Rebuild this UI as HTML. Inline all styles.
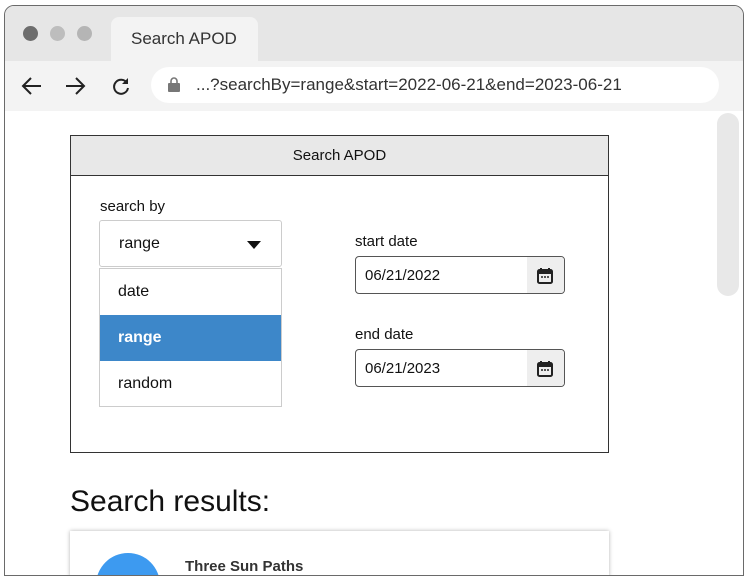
<!DOCTYPE html><html><head><style>
*{margin:0;padding:0;box-sizing:border-box}
body{width:750px;height:576px;background:#fff;position:relative;overflow:hidden;font-family:"Liberation Sans",Arial,sans-serif}
.win{position:absolute;left:4px;top:5px;width:740px;height:571px;border:1.5px solid #6a6a6a;border-radius:10px 10px 0 0;overflow:hidden;background:#fff}
.top{position:absolute;left:0;top:0;width:100%;height:56px;background:#e6e6e6}
.dot{position:absolute;top:20px;width:15px;height:15px;border-radius:50%}
.tab{position:absolute;left:106px;top:11px;width:147px;height:46px;background:#f3f3f3;border-radius:8px 8px 0 0;font-size:17px;color:#333;padding:12px 0 0 20px}
.bar{position:absolute;left:0;top:55px;width:100%;height:50px;background:#f3f3f3}
.url{position:absolute;left:146px;top:6px;width:568px;height:36px;background:#fff;border-radius:18px;font-size:17px;color:#333;padding:8px 0 0 45px}
.a{position:absolute}
</style></head><body>
<div class="win">
<div class="top">
<div class="dot" style="left:18px;background:#6d6d6d"></div>
<div class="dot" style="left:45px;background:#bdbdbd"></div>
<div class="dot" style="left:72px;background:#b5b5b5"></div>
<div class="tab">Search APOD</div>
</div>
<div class="bar">
<svg class="a" style="left:16px;top:15px" width="22" height="20" viewBox="0 0 22 20"><path d="M20 10H3M10 2L2 10l8 8" stroke="#222" stroke-width="2" fill="none"/></svg>
<svg class="a" style="left:59px;top:15px" width="22" height="20" viewBox="0 0 22 20"><path d="M2 10h17M12 2l8 8-8 8" stroke="#222" stroke-width="2" fill="none"/></svg>
<svg class="a" style="left:106px;top:15px" width="20" height="20" viewBox="0 0 20 20"><path d="M16 7A7 7 0 1 0 17 12" stroke="#222" stroke-width="2" fill="none"/><path d="M17 2v6h-6z" fill="#222"/></svg>
<div class="url"><svg class="a" style="left:17px;top:10px" width="12" height="15" viewBox="0 0 12 15"><path d="M3 6V4a3 3 0 0 1 6 0v2" stroke="#777" stroke-width="1.6" fill="none"/><rect x="0" y="6" width="12" height="9" rx="1" fill="#777"/></svg>...?searchBy=range&amp;start=2022-06-21&amp;end=2023-06-21</div>
</div>
<div class="a" style="left:712px;top:107px;width:22px;height:183px;background:#e8e8e8;border-radius:11px"></div>

<div class="a" style="left:65px;top:129px;width:539px;height:318px;border:1.5px solid #333">
<div style="height:40px;background:#e8e8e8;border-bottom:1.5px solid #333;text-align:center;font-size:15px;color:#111;padding-top:11px">Search APOD</div>
</div>
<div class="a" style="left:95px;top:192px;font-size:15px;color:#111">search by</div>
<div class="a" style="left:94px;top:214px;width:183px;height:47px;border:1px solid #ccc;border-radius:3px;font-size:16px;color:#111;padding:14px 0 0 19px">range
<svg class="a" style="left:147px;top:20px" width="14" height="8"><path d="M0 0h14L7 8z" fill="#111"/></svg></div>
<div class="a" style="left:94px;top:262px;width:183px;height:139px;border:1px solid #ccc;font-size:16px;color:#111">
<div style="height:46px;padding:14px 0 0 18px">date</div>
<div style="height:46px;padding:14px 0 0 18px;background:#3d87c9;color:#fff;font-weight:bold">range</div>
<div style="height:45px;padding:14px 0 0 18px">random</div>
</div>
<div class="a" style="left:350px;top:227px;font-size:15px;color:#111">start date</div>
<div class="a" style="left:350px;top:250px;width:210px;height:38px;border:1px solid #555;border-radius:4px;font-size:15px;color:#111;padding:10px 0 0 9px;overflow:hidden">06/21/2022<div class="a" style="right:0;top:0;width:37px;height:36px;background:#eee"></div>
<svg class="a" style="right:11px;top:10px" width="16" height="17" viewBox="0 0 16 17"><rect x="1" y="3" width="14" height="13" rx="1.5" fill="none" stroke="#222" stroke-width="2"/><rect x="1" y="3" width="14" height="4" fill="#222"/><path d="M4 1v3M12 1v3" stroke="#222" stroke-width="2"/><path d="M4 10h2M7 10h2M10 10h2" stroke="#222" stroke-width="1.5"/></svg></div>
<div class="a" style="left:350px;top:320px;font-size:15px;color:#111">end date</div>
<div class="a" style="left:350px;top:343px;width:210px;height:38px;border:1px solid #555;border-radius:4px;font-size:15px;color:#111;padding:10px 0 0 9px;overflow:hidden">06/21/2023<div class="a" style="right:0;top:0;width:37px;height:36px;background:#eee"></div>
<svg class="a" style="right:11px;top:10px" width="16" height="17" viewBox="0 0 16 17"><rect x="1" y="3" width="14" height="13" rx="1.5" fill="none" stroke="#222" stroke-width="2"/><rect x="1" y="3" width="14" height="4" fill="#222"/><path d="M4 1v3M12 1v3" stroke="#222" stroke-width="2"/><path d="M4 10h2M7 10h2M10 10h2" stroke="#222" stroke-width="1.5"/></svg></div>

<div class="a" style="left:65px;top:479px;font-size:30px;color:#111">Search results:</div>
<div class="a" style="left:65px;top:525px;width:539px;height:46px;box-shadow:0 0 4px rgba(0,0,0,.3);background:#fff;overflow:hidden">
<div class="a" style="left:26px;top:22px;width:64px;height:64px;border-radius:50%;background:#3d9af0"></div>
<div class="a" style="left:115px;top:27px;font-size:15px;font-weight:bold;color:#333">Three Sun Paths</div>
</div>
</div>
</body></html>
